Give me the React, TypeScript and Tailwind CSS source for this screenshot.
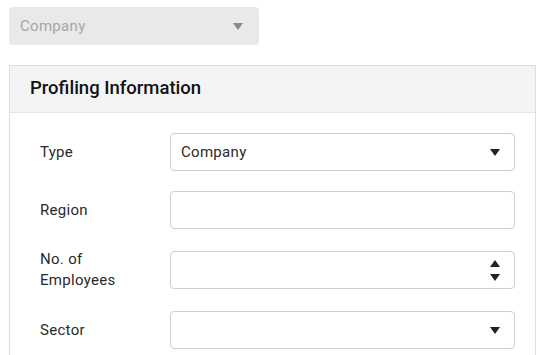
import React from 'react';

type Field = {
  label: string[];
  kind: 'select' | 'text' | 'number';
  value?: string;
};

const fields: Field[] = [
  { label: ['Type'], kind: 'select', value: 'Company' },
  { label: ['Region'], kind: 'text' },
  { label: ['No. of', 'Employees'], kind: 'number' },
  { label: ['Sector'], kind: 'select' },
];

function Caret({ up = false, className = '' }: { up?: boolean; className?: string }) {
  return (
    <svg width="10" height="7" viewBox="0 0 10 7" className={className}>
      {up ? <path d="M5 0 L10 7 L0 7 Z" fill="currentColor" /> : <path d="M0 0 L10 0 L5 7 Z" fill="currentColor" />}
    </svg>
  );
}

function FieldRow({ field }: { field: Field }) {
  return (
    <div className="flex items-center">
      <div className="w-[130px] text-[15px] leading-[21px] tracking-[0.3px] text-[#2a2a2a]">
        {field.label.map((l) => (
          <div key={l}>{l}</div>
        ))}
      </div>
      <div className="flex h-[38px] w-[345px] items-center justify-between rounded-[4px] border border-[#cfcfcf] bg-white pl-[10px] pr-[14px]">
        <span className="text-[15px] tracking-[0.3px] text-[#2a2a2a]">{field.value ?? ''}</span>
        {field.kind === 'select' && <Caret className="text-[#222]" />}
        {field.kind === 'number' && (
          <div className="flex flex-col items-center gap-[7px]">
            <Caret up className="text-[#222]" />
            <Caret className="text-[#222]" />
          </div>
        )}
      </div>
    </div>
  );
}

export default function App() {
  return (
    <div className="h-[355px] w-[554px] overflow-hidden bg-white pl-[9px] pt-[7px] font-['Roboto',sans-serif]">
      <div className="flex h-[38px] w-[250px] items-center justify-between rounded-[4px] bg-[#e9e9e9] pl-[11px] pr-[16px]">
        <span className="text-[15px] tracking-[0.3px] text-[#a6a6a6]">Company</span>
        <Caret className="text-[#8a8a8a]" />
      </div>

      <div className="mt-[20px] w-[527px] border border-[#dedede]">
        <div className="flex h-[47px] items-center border-b border-[#e6e6e6] bg-[#f4f4f4] pl-[20px]">
          <h2 className="text-[18.5px] font-medium text-[#111]">Profiling Information</h2>
        </div>
        <div className="flex flex-col gap-[20px] pl-[30px] pt-[20px] pb-[20px]">
          {fields.map((f) => (
            <FieldRow key={f.label.join(' ')} field={f} />
          ))}
        </div>
      </div>
    </div>
  );
}
